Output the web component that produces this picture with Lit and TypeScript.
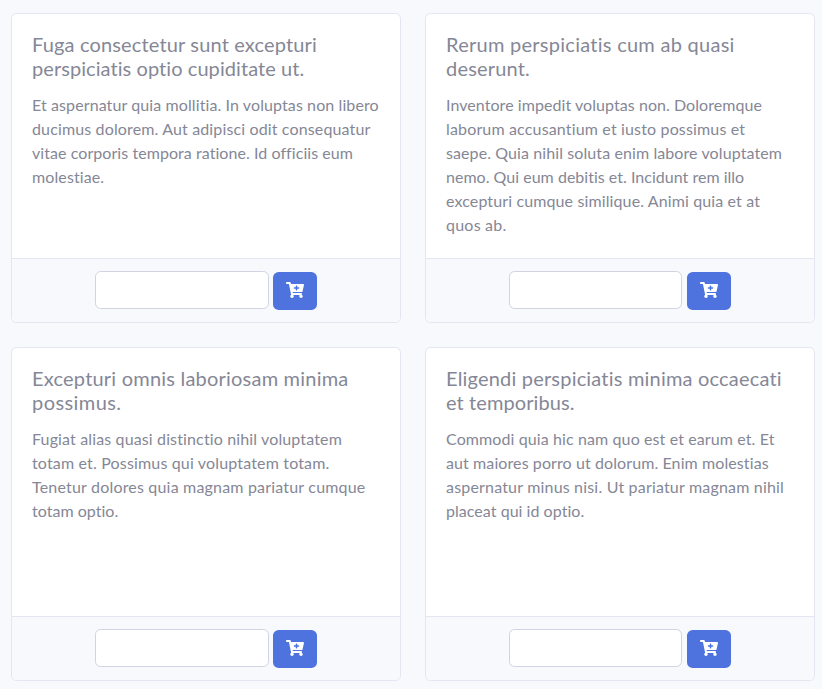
import { LitElement, html, css, svg } from "lit";
import { customElement, property } from "lit/decorators.js";

/** A line of text and the width it is set to, in pixels. */
type Line = [text: string, width: number];

interface Product {
  title: Line[];
  text: Line[];
}

const products: Product[] = [
  {
    title: [
      ["Fuga consectetur sunt excepturi", 285],
      ["perspiciatis optio cupiditate ut.", 273],
    ],
    text: [
      ["Et aspernatur quia mollitia. In voluptas non libero", 347],
      ["ducimus dolorem. Aut adipisci odit consequatur", 338.5],
      ["vitae corporis tempora ratione. Id officiis eum", 320.5],
      ["molestiae.", 72.5],
    ],
  },
  {
    title: [
      ["Rerum perspiciatis cum ab quasi", 289],
      ["deserunt.", 84],
    ],
    text: [
      ["Inventore impedit voluptas non. Doloremque", 316],
      ["laborum accusantium et iusto possimus et", 299.5],
      ["saepe. Quia nihil soluta enim labore voluptatem", 336],
      ["nemo. Qui eum debitis et. Incidunt rem illo", 298.5],
      ["excepturi cumque similique. Animi quia et at", 314],
      ["quos ab.", 60.5],
    ],
  },
  {
    title: [
      ["Excepturi omnis laboriosam minima", 316.5],
      ["possimus.", 89.5],
    ],
    text: [
      ["Fugiat alias quasi distinctio nihil voluptatem", 310.5],
      ["totam et. Possimus qui voluptatem totam.", 297.5],
      ["Tenetur dolores quia magnam pariatur cumque", 333.5],
      ["totam optio.", 86.5],
    ],
  },
  {
    title: [
      ["Eligendi perspiciatis minima occaecati", 336.5],
      ["et temporibus.", 128.5],
    ],
    text: [
      ["Commodi quia hic nam quo est et earum et. Et", 328.5],
      ["aut maiores porro ut dolorum. Enim molestias", 323],
      ["aspernatur minus nisi. Ut pariatur magnam nihil", 338],
      ["placeat qui id optio.", 138.5],
    ],
  },
];

const cartPlus = svg`<path fill="currentColor" d="M504.717 320H211.572l6.545 32h268.418c15.401 0 26.816 14.301 23.403 29.319l-5.517 24.276C523.112 414.668 536 433.828 536 456c0 31.202-25.519 56.444-56.824 55.994-29.823-.429-54.35-24.631-55.155-54.447-.44-16.287 6.085-31.049 16.803-41.548H231.176C241.553 426.165 248 440.326 248 456c0 31.813-26.528 57.431-58.67 55.938-28.54-1.325-51.751-24.385-53.251-52.917-1.158-22.034 10.436-41.455 28.051-51.586L93.883 64H24C10.745 64 0 53.255 0 40V24C0 10.745 10.745 0 24 0h102.529c11.401 0 21.228 8.021 23.513 19.19L159.208 64H551.99c15.401 0 26.816 14.301 23.403 29.319l-47.273 208C525.637 312.246 515.923 320 504.717 320zM408 168h-48v-40c0-8.837-7.163-16-16-16h-16c-8.837 0-16 7.163-16 16v40h-48c-8.837 0-16 7.163-16 16v16c0 8.837 7.163 16 16 16h48v40c0 8.837 7.163 16 16 16h16c8.837 0 16-7.163 16-16v-40h48c8.837 0 16-7.163 16-16v-16c0-8.837-7.163-16-16-16z"/>`;

@customElement("product-card")
class ProductCard extends LitElement {
  @property({ attribute: false }) product!: Product;

  static styles = css`
    :host {
      display: flex;
      flex-direction: column;
      box-sizing: border-box;
      min-width: 0;
      background: #fff;
      border: 1px solid #e3e6f0;
      border-radius: 5.6px;
      overflow: hidden;
    }
    .body {
      flex: 1;
      padding: 18px 20px 20px;
    }
    .title {
      margin: 0 0 13px;
      font-size: 20px;
      font-weight: 400;
      line-height: 24px;
    }
    .text {
      margin: 0;
      font-size: 16px;
      line-height: 24px;
    }
    .row {
      display: block;
      white-space: nowrap;
    }
    .footer {
      display: flex;
      justify-content: center;
      height: 63px;
      box-sizing: content-box;
      border-top: 1px solid #e3e6f0;
      background: #f8f9fc;
    }
    .form {
      display: flex;
      width: 222px;
      gap: var(--form-gap, 4px);
      padding-top: 12px;
    }
    .quantity {
      flex: 1;
      min-width: 0;
      height: 38px;
      box-sizing: border-box;
      padding: 6px 12px;
      border: 1px solid #d1d3e2;
      border-radius: 5.6px;
      background: #fff;
      color: #6e707e;
      font: inherit;
    }
    .add {
      display: flex;
      align-items: center;
      justify-content: center;
      width: 44px;
      height: 38px;
      margin: 1px 0 0;
      padding: 0;
      border: 0;
      border-radius: 5.6px;
      background: #4e73df;
      color: #fff;
    }
    .icon {
      display: block;
      width: 18px;
      height: 16px;
      margin-bottom: 2px;
    }
  `;

  /** Tracks each line so that it fills its set width. */
  firstUpdated() {
    this.renderRoot.querySelectorAll<HTMLElement>(".line").forEach((line) => {
      const natural = line.getBoundingClientRect().width;
      const count = (line.textContent ?? "").length;
      const spacing = (Number(line.dataset.width) - natural) / count;
      line.style.letterSpacing = `${spacing.toFixed(4)}px`;
    });
  }

  private lines(lines: Line[]) {
    return lines.map(
      ([text, width]) =>
        html`<span class="row"><span class="line" data-width=${width}>${text}</span></span>`
    );
  }

  render() {
    return html`
      <div class="body">
        <h5 class="title">${this.lines(this.product.title)}</h5>
        <p class="text">${this.lines(this.product.text)}</p>
      </div>
      <div class="footer">
        <div class="form">
          <input class="quantity" type="text" aria-label="Quantity" />
          <button class="add" type="button" aria-label="Add to cart">
            <svg class="icon" viewBox="0 0 576 512">${cartPlus}</svg>
          </button>
        </div>
      </div>
    `;
  }
}

@customElement("app-root")
class AppRoot extends LitElement {
  static styles = css`
    :host {
      display: block;
      box-sizing: border-box;
      height: 689px;
      padding: 13px 7px 8px 11px;
      overflow: hidden;
      background: #f8f9fc;
      color: #858796;
      font-family: Lato, "Open Sans", sans-serif;
    }
    .grid {
      display: grid;
      grid-template-columns: 390px 390px;
      grid-template-rows: 310px 334px;
      gap: 24px;
    }
    .card:nth-child(even) {
      --form-gap: 5px;
    }
  `;

  render() {
    return html`<div class="grid">
      ${products.map((p) => html`<product-card class="card" .product=${p}></product-card>`)}
    </div>`;
  }
}
